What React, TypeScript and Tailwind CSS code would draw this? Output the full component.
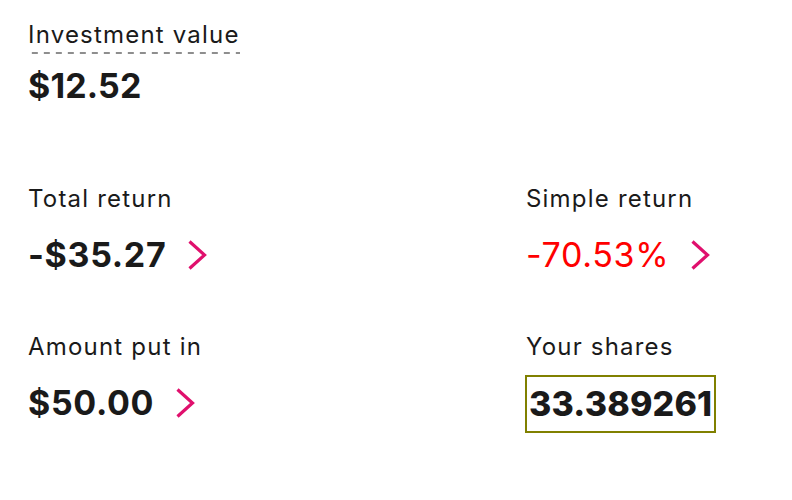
import React from "react";

function Chevron() {
  return (
    <svg width="20" height="30" viewBox="0 0 20 30" fill="none" className="shrink-0">
      <path d="M2.5 1.5 L17.5 15 L2.5 28.5" stroke="#e0106d" strokeWidth="3.2" strokeLinecap="butt" strokeLinejoin="miter" />
    </svg>
  );
}

function Stat({ label, value, valueClass, chevron }: { label: string; value: string; valueClass?: string; chevron?: boolean }) {
  return (
    <div className="flex flex-col">
      <div className="text-[24px] leading-[32px] tracking-[0.05em] text-[#1a1a1a]">{label}</div>
      <div className="mt-[18px] flex h-[44px] items-center gap-[21px]">
        <span className={"text-[34px] leading-[44px] tracking-[0.02em] " + (valueClass ?? "font-bold text-[#1a1a1a]")}>{value}</span>
        {chevron && <Chevron />}
      </div>
    </div>
  );
}

export default function App() {
  return (
    <div className="h-[500px] w-[792px] bg-white px-[28px] pt-[19px] font-['Inter',sans-serif] tracking-[0.01em]">
      <div className="inline-block bg-[linear-gradient(to_right,#8e8e8e_0_6px,transparent_6px_12px)] bg-[length:12px_2px] bg-bottom bg-repeat-x pb-[3px] text-[24px] leading-[32px] tracking-[0.05em] text-[#1a1a1a]">
        Investment value
      </div>
      <div className="mt-[10px] text-[34px] font-bold leading-[44px] text-[#1a1a1a]">$12.52</div>

      <div className="mt-[75px] grid grid-cols-[498px_1fr] gap-y-[54px]">
        <Stat label="Total return" value="-$35.27" chevron />
        <Stat label="Simple return" value="-70.53%" valueClass="font-normal text-[#ff0000]" chevron />
        <Stat label="Amount put in" value="$50.00" chevron />
        <div className="flex flex-col">
          <div className="text-[24px] leading-[32px] tracking-[0.05em] text-[#1a1a1a]">Your shares</div>
          <div className="ml-[-1px] mt-[12px] flex">
            <span className="border-2 border-[#808000] px-[2px] py-[5px] text-[34px] font-extrabold leading-[44px] text-[#1a1a1a]">
              33.389261
            </span>
          </div>
        </div>
      </div>
    </div>
  );
}
